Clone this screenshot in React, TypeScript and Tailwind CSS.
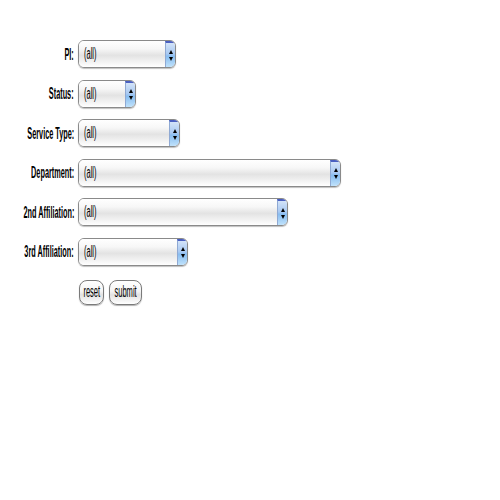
import React from "react";

const rows: { label: string; w: number }[] = [
  { label: "PI:", w: 98 },
  { label: "Status:", w: 58 },
  { label: "Service Type:", w: 102 },
  { label: "Department:", w: 263 },
  { label: "2nd Affiliation:", w: 210 },
  { label: "3rd Affiliation:", w: 110 },
];

function FakeSelect({ w }: { w: number }) {
  return (
    <div
      className="flex h-[28px] rounded-[6px] border border-[#8a8a8a] shadow-[0_1px_1px_rgba(0,0,0,0.25)] overflow-hidden"
      style={{ width: w }}
    >
      <div className="flex-1 flex items-center pl-[5px] text-[16px] leading-none text-black bg-[linear-gradient(#ffffff_0%,#f7f7f7_30%,#e3e3e3_55%,#f2f2f2_80%,#ffffff_100%)]">
        <span className="inline-block origin-left scale-x-[0.47]">(all)</span>
      </div>
      <div className="w-[10px] flex flex-col items-center justify-center gap-[3px] border-l border-[#8fa9d3] border-t-2 border-t-[#4a5fc0] bg-[linear-gradient(#d3e3f8_0%,#a9c9f2_45%,#88bdf0_55%,#c0e2fb_100%)]">
        <div className="w-0 h-0 border-l-[2px] border-r-[2px] border-b-[4px] border-l-transparent border-r-transparent border-b-black" />
        <div className="w-0 h-0 border-l-[2px] border-r-[2px] border-t-[4px] border-l-transparent border-r-transparent border-t-black" />
      </div>
    </div>
  );
}

function Btn({ children, w }: { children: React.ReactNode; w: number }) {
  return (
    <div
      className="h-[25px] flex items-center justify-center rounded-[8px] border border-[#7a7a7a] text-[16px] leading-none text-black bg-[linear-gradient(#ffffff_0%,#f4f4f4_45%,#e2e2e2_60%,#ffffff_100%)] shadow-[0_1px_1px_rgba(0,0,0,0.3)]"
      style={{ width: w }}
    >
      <span className="inline-block shrink-0 scale-x-[0.47]">{children}</span>
    </div>
  );
}

export default function App() {
  return (
    <div className="w-[500px] h-[500px] bg-white overflow-hidden font-['Liberation_Sans',Arial,sans-serif]">
      <div className="pt-[40px] flex flex-col gap-[11.6px]">
        {rows.map((r) => (
          <div key={r.label} className="flex items-center h-[28px]">
            <div className="w-[74px] shrink-0 flex justify-end font-bold text-[17px] leading-none text-black">
              <span className="inline-block shrink-0 origin-right scale-x-[0.43] whitespace-nowrap">
                {r.label}
              </span>
            </div>
            <div className="ml-[4px]">
              <FakeSelect w={r.w} />
            </div>
          </div>
        ))}
        <div className="flex gap-[5px] ml-[79px] mt-[2px]">
          <Btn w={25}>reset</Btn>
          <Btn w={33}>submit</Btn>
        </div>
      </div>
    </div>
  );
}
